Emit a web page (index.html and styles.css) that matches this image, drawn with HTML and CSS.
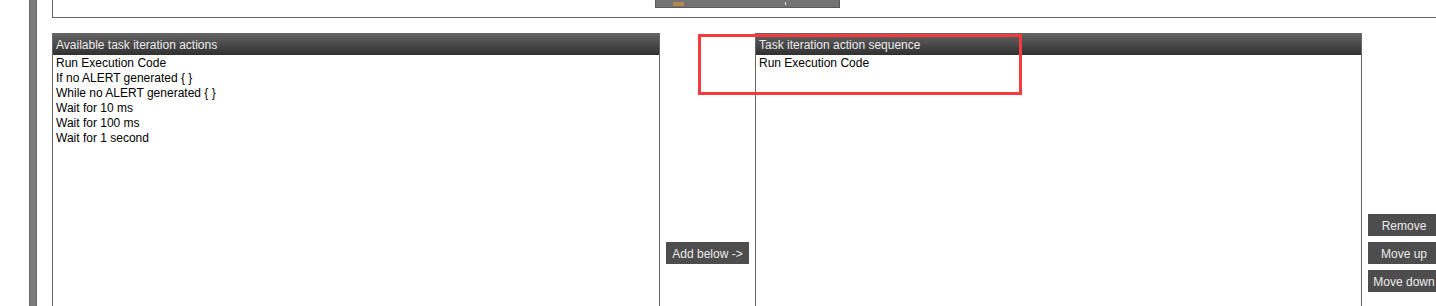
FILE: index.html
```html
<!DOCTYPE html>
<html lang="en">

<head>
    <meta charset="UTF-8">
    <title>Task iteration actions</title>
    <link rel="stylesheet" href="styles.css">
</head>

<body>
    <div class="page">
        <!-- Left splitter bar -->
        <div class="splitter"></div>

        <div class="content">
            <!-- Upper panel (scrolled, only its bottom edge is visible) -->
            <div class="top-panel">
                <div class="top-button">
                    <span class="top-icon"></span>
                    <span class="top-mark"></span>
                </div>
            </div>

            <div class="lists">
                <div class="list-box list-left">
                    <div class="list-header">Available task iteration actions</div>
                    <div class="list-body">
                        <div class="list-item">Run Execution Code</div>
                        <div class="list-item">If no ALERT generated { }</div>
                        <div class="list-item">While no ALERT generated { }</div>
                        <div class="list-item">Wait for 10 ms</div>
                        <div class="list-item">Wait for 100 ms</div>
                        <div class="list-item">Wait for 1 second</div>
                    </div>
                </div>

                <div class="middle">
                    <button class="btn btn-add">Add below -&gt;</button>
                </div>

                <div class="list-box list-right">
                    <div class="list-header">Task iteration action sequence</div>
                    <div class="list-body">
                        <div class="list-item">Run Execution Code</div>
                    </div>
                </div>

                <div class="side-buttons">
                    <button class="btn btn-side">Remove</button>
                    <button class="btn btn-side">Move up</button>
                    <button class="btn btn-side">Move down</button>
                </div>
            </div>
        </div>

        <!-- Annotation -->
        <div class="highlight"></div>
    </div>
</body>

</html>
```

FILE: styles.css
```css
* {
    margin: 0;
    padding: 0;
    box-sizing: border-box;
}

body {
    background-color: #fff;
    font-family: 'Liberation Sans', Arial, sans-serif;
    font-size: 12px;
    color: #000;
    overflow: hidden;
}

.page {
    position: relative;
    display: flex;
    height: 306px;
    overflow: hidden;
}

/* Splitter */
.splitter {
    margin-left: 29px;
    width: 8px;
    height: 100%;
    background-color: #7c7c7c;
    border-left: 1px solid #6a6a6a;
    border-right: 1px solid #6a6a6a;
    flex-shrink: 0;
}

.content {
    margin-left: 15px;
    flex: 1;
    display: flex;
    flex-direction: column;
    min-width: 0;
}

/* Upper panel */
.top-panel {
    height: 18px;
    width: 1400px;
    border-left: 1px solid #666;
    border-bottom: 1px solid #666;
    position: relative;
}

.top-button {
    margin-left: 602px;
    margin-top: -15px;
    width: 185px;
    height: 23px;
    background-color: #737373;
    border: 1px solid #5a5a5a;
    position: relative;
}

.top-icon {
    position: absolute;
    left: 17px;
    bottom: 1px;
    width: 11px;
    height: 4px;
    background-color: #b08a4e;
}

.top-mark {
    position: absolute;
    left: 129px;
    bottom: 2px;
    width: 1px;
    height: 3px;
    background-color: #e8e8e8;
}

/* Lists */
.lists {
    margin-top: 15px;
    display: flex;
    height: 280px;
}

.list-box {
    border-left: 1px solid #666;
    border-right: 1px solid #666;
    display: flex;
    flex-direction: column;
    flex-shrink: 0;
}

.list-left {
    width: 608px;
}

.list-right {
    width: 607px;
}

.list-header {
    height: 22px;
    line-height: 22px;
    padding-top: 1px;
    padding-left: 3px;
    color: #ececec;
    background: linear-gradient(#656565, #303030);
    white-space: nowrap;
}

.list-body {
    flex: 1;
    padding-top: 1px;
    padding-left: 3px;
}

.list-item {
    height: 15px;
    line-height: 15px;
    white-space: nowrap;
}

/* Buttons */
.btn {
    font-family: 'Liberation Sans', Arial, sans-serif;
    font-size: 12px;
    background-color: #4d4d4d;
    color: #ececec;
    border: none;
    height: 22px;
    padding-top: 2px;
    white-space: nowrap;
}

.middle {
    width: 95px;
    padding-top: 209px;
    padding-left: 6px;
    flex-shrink: 0;
}

.btn-add {
    width: 83px;
}

.side-buttons {
    margin-left: 6px;
    padding-top: 181px;
    display: flex;
    flex-direction: column;
    gap: 6px;
    flex-shrink: 0;
}

.btn-side {
    width: 72px;
}

/* Red annotation frame */
.highlight {
    position: absolute;
    left: 698px;
    top: 34px;
    width: 324px;
    height: 61px;
    border: 3px solid #f43b3d;
}
```
